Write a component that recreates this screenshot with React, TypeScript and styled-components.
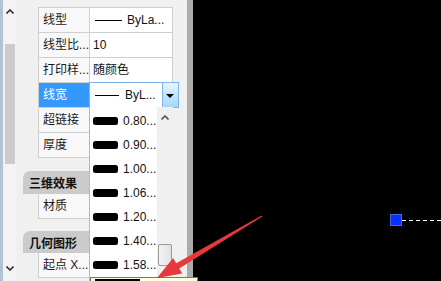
import React from "react";
import styled, { createGlobalStyle } from "styled-components";

const Global = createGlobalStyle`
  html, body { margin: 0; padding: 0; background: #000; overflow: hidden; }
  body { font-family: "Liberation Sans", "Noto Sans CJK SC", sans-serif; font-size: 12px; }
`;

const Screen = styled.div`
  position: relative;
  width: 441px;
  height: 281px;
  display: flex;
  overflow: hidden;
`;

const Panel = styled.div`
  width: 193px;
  height: 100%;
  display: flex;
  background: #f0f0f0;
  flex-shrink: 0;
`;

const PanelEdge = styled.div`
  width: 3px;
  background: #b2c1d4;
`;

const VScroll = styled.div`
  width: 13px;
  display: flex;
  flex-direction: column;
  align-items: center;
  background: #f3f3f3;
  padding-top: 9px;
  padding-bottom: 10px;
  box-sizing: border-box;
`;

const Thumb = styled.div`
  width: 10px;
  height: 120px;
  margin-top: 30px;
  background: #cbcbcb;
`;

const Spacer = styled.div`
  flex: 1;
`;

const PropArea = styled.div`
  position: relative;
  width: 171px;
  padding: 7px 14px 0 7px;
  box-sizing: border-box;
  display: flex;
  flex-direction: column;
`;

const Divider = styled.div`
  width: 6px;
  background: #ababab;
`;

const Table = styled.div<{ $indent?: boolean }>`
  margin-left: 15px;
  border-top: ${(p) => (p.$indent ? "none" : "1px solid #cfcfcf")};
  border-right: 1px solid #cfcfcf;
`;

const Row = styled.div`
  position: relative;
  height: 25px;
  display: grid;
  grid-template-columns: 52px 1fr;
  box-sizing: border-box;
  border-bottom: 1px solid #cfcfcf;
`;

const NameCell = styled.div<{ $sel?: boolean }>`
  display: flex;
  align-items: center;
  padding-left: 4px;
  border-left: 1px solid #cfcfcf;
  border-right: 1px solid #cfcfcf;
  background: ${(p) => (p.$sel ? "#3399ff" : "#f8f8f8")};
  color: ${(p) => (p.$sel ? "#ffffff" : "#1a1a1a")};
  white-space: nowrap;
  overflow: hidden;
  line-height: 14px;
`;

const ValueCell = styled.div`
  display: flex;
  align-items: center;
  gap: 5px;
  padding-left: 3px;
  background: #ffffff;
  color: #111;
  white-space: nowrap;
  overflow: visible;
  position: relative;
  line-height: 14px;
`;

const LineSample = styled.span<{ $w: number }>`
  display: inline-block;
  width: ${(p) => p.$w}px;
  height: 1px;
  background: #000;
  margin-left: 2px;
`;

const Combo = styled.div`
  position: relative;
  display: flex;
  align-items: center;
  gap: 6px;
  margin: -1px 0 -1px -1px;
  padding-left: 3px;
  border: 1px solid #7eb4ea;
  background: #fff;
  color: #111;
  white-space: nowrap;
  line-height: 14px;
`;

const ComboButton = styled.div`
  margin-left: auto;
  width: 15px;
  align-self: stretch;
  border-left: 1px solid #7eb4ea;
  background: linear-gradient(#eaf6fd, #bee6fd 50%, #a7d9f5);
  display: flex;
  align-items: center;
  justify-content: center;
`;

const Caret = styled.div`
  width: 0;
  height: 0;
  border-left: 4px solid transparent;
  border-right: 4px solid transparent;
  border-top: 4px solid #000;
  margin-top: 2px;
`;

const Dropdown = styled.div`
  position: absolute;
  left: -1px;
  top: 100%;
  width: 83px;
  height: 180px;
  background: #fff;
  border-left: 1px solid #b8b8b8;
  display: flex;
  z-index: 5;
`;

const OptionList = styled.div`
  flex: 1;
  padding-top: 2px;
  display: flex;
  flex-direction: column;
`;

const Option = styled.div`
  height: 24px;
  display: flex;
  align-items: center;
  gap: 5px;
  padding-left: 3px;
  color: #111;
  font-size: 12px;
`;

const WeightBar = styled.span`
  display: inline-block;
  width: 25px;
  height: 8px;
  border-radius: 2.5px;
  background: #000;
`;

const DScroll = styled.div`
  width: 16px;
  background: #f0f0f0;
  display: flex;
  flex-direction: column;
  align-items: center;
  padding-top: 8px;
  box-sizing: border-box;
`;

const DThumb = styled.div`
  width: 14px;
  height: 22px;
  margin-top: 124px;
  box-sizing: border-box;
  border: 1px solid #9a9a9a;
  border-radius: 2px;
  background: linear-gradient(90deg, #f4f4f4, #e2e2e2);
`;

const Group = styled.div<{ $gap: number }>`
  margin-top: ${(p) => p.$gap}px;
  display: flex;
  flex-direction: column;
`;

const GroupHeader = styled.div<{ $h: number }>`
  height: ${(p) => p.$h}px;
  background: #cbcbcb;
  border-top-left-radius: 7px;
  display: flex;
  align-items: center;
  padding-left: 6px;
  font-weight: bold;
  color: #111;
  font-size: 12px;
`;

const Canvas = styled.div`
  flex: 1;
  position: relative;
  background: #000;
`;

const Grip = styled.svg`
  position: absolute;
  left: 197px;
  top: 214px;
`;

const Overlay = styled.svg`
  position: absolute;
  left: 0;
  top: 0;
  pointer-events: none;
  z-index: 10;
`;

const Tip = styled.div`
  position: absolute;
  left: 90px;
  top: 277px;
  width: 108px;
  height: 10px;
  box-sizing: border-box;
  border: 1px solid #767676;
  background: #ffffe1;
  padding: 1px 0 0 4px;
  z-index: 9;
`;

const TipLine = styled.div`
  width: 45px;
  height: 2px;
  background: #000;
`;

const Chevron = ({ down, color = "#333" }: { down?: boolean; color?: string }) => (
  <svg width="8" height="5" viewBox="0 0 8 5">
    <path
      d={down ? "M0.5 0.5 L4 4 L7.5 0.5" : "M0.5 4.5 L4 1 L7.5 4.5"}
      fill="none"
      stroke={color}
      strokeWidth="1.6"
    />
  </svg>
);

const weights = ["0.80...", "0.90...", "1.00...", "1.06...", "1.20...", "1.40...", "1.58..."];

export default function App() {
  return (
    <>
      <Global />
      <Screen>
        <Panel>
          <PanelEdge />
          <VScroll>
            <Chevron />
            <Thumb />
            <Spacer />
            <Chevron down />
          </VScroll>
          <PropArea>
            <Table>
              <Row>
                <NameCell>线型</NameCell>
                <ValueCell>
                  <LineSample $w={27} />
                  ByLa...
                </ValueCell>
              </Row>
              <Row>
                <NameCell>线型比...</NameCell>
                <ValueCell>10</ValueCell>
              </Row>
              <Row>
                <NameCell>打印样...</NameCell>
                <ValueCell>随颜色</ValueCell>
              </Row>
              <Row>
                <NameCell $sel>线宽</NameCell>
                <Combo>
                  <LineSample $w={24} />
                  ByL...
                  <ComboButton>
                    <Caret />
                  </ComboButton>
                  <Dropdown>
                    <OptionList>
                      {weights.map((w) => (
                        <Option key={w}>
                          <WeightBar />
                          {w}
                        </Option>
                      ))}
                    </OptionList>
                    <DScroll>
                      <Chevron color="#555" />
                      <DThumb />
                    </DScroll>
                  </Dropdown>
                </Combo>
              </Row>
              <Row>
                <NameCell>超链接</NameCell>
                <ValueCell />
              </Row>
              <Row>
                <NameCell>厚度</NameCell>
                <ValueCell />
              </Row>
            </Table>
            <Group $gap={13}>
              <GroupHeader $h={23}>三维效果</GroupHeader>
              <Table $indent>
                <Row>
                  <NameCell>材质</NameCell>
                  <ValueCell />
                </Row>
              </Table>
            </Group>
            <Group $gap={12}>
              <GroupHeader $h={22}>几何图形</GroupHeader>
              <Table $indent>
                <Row>
                  <NameCell>起点 X...</NameCell>
                  <ValueCell />
                </Row>
              </Table>
            </Group>
          </PropArea>
          <Divider />
        </Panel>
        <Canvas>
          <Grip width="51" height="14" viewBox="0 0 51 14">
            <rect x="0.5" y="0.5" width="11" height="11" fill="#0632ff" stroke="#4a66d8" />
            <line x1="12" y1="6.5" x2="51" y2="6.5" stroke="#fff" strokeWidth="1" strokeDasharray="4 3" />
          </Grip>
        </Canvas>
        <Overlay width="441" height="281" viewBox="0 0 441 281">
          <polygon
            points="157,278 173.1,258.1 176.2,263.2 261.7,215.5 262.3,216.5 179.2,268.4 182.3,273.5"
            fill="#e8383d"
          />
        </Overlay>
        <Tip>
          <TipLine />
        </Tip>
      </Screen>
    </>
  );
}
